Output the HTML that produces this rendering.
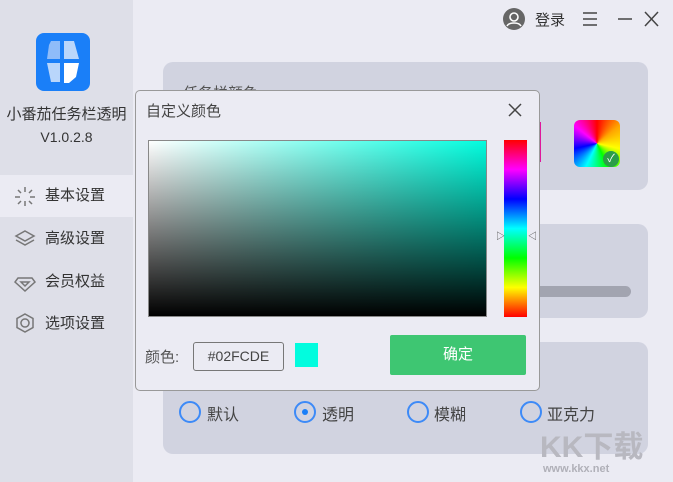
<!DOCTYPE html><html><head><meta charset="utf-8"><style>
*{margin:0;padding:0;box-sizing:border-box}
body{width:673px;height:482px;overflow:hidden;background:#ebebf3;font-family:"Liberation Sans","Noto Sans CJK SC",sans-serif;position:relative;color:#333}
.side{position:absolute;left:0;top:0;width:133px;height:482px;background:#dedfe8}
.abs{position:absolute}
.card{position:absolute;left:163px;width:485px;background:#d1d3e0;border-radius:10px}
.nav{position:absolute;left:0;width:133px;height:42px;font-size:15px;line-height:42px;padding-left:45px;color:#333}
.radio{position:absolute;top:401px;width:22px;height:22px;border:2px solid #3d8af7;border-radius:50%}
.rl{position:absolute;top:401px;font-size:16px;color:#444}
</style></head><body>
<div class="side"></div>
<div class="abs" style="left:36px;top:33px;width:54px;height:58px;background:#1a7ff8;border-radius:8px"></div>
<svg class="abs" style="left:36px;top:33px" width="54" height="58"><path d="M15 8h9v18H11l2-14z" fill="#8fbcf9"/><path d="M28 8h10l5 18H28z" fill="#b9d6fb"/><path d="M11 30h13v19h-9z" fill="#b9d6fb"/><path d="M28 30h15l-3 14-7 6h-5z" fill="#fff"/></svg>
<div class="abs" style="left:0;top:103px;width:133px;text-align:center;font-size:15px">小番茄任务栏透明</div>
<div class="abs" style="left:0;top:129px;width:133px;text-align:center;font-size:14px">V1.0.2.8</div>
<div class="nav" style="top:175px;background:#ebebf3">基本设置</div>
<div class="nav" style="top:218px">高级设置</div>
<div class="nav" style="top:261px">会员权益</div>
<div class="nav" style="top:303px">选项设置</div>
<svg class="abs" style="left:14px;top:186px" width="22" height="160" fill="none" stroke="#777" stroke-width="1.5"><path d="M11 1v5M11 15v5M1 11h5M16 11h5M4 4l3 3M15 15l3 3M4 18l3-3M15 7l3-3"/><path d="M11 45l9 5-9 5-9-5zM2 54l9 5 9-5"/><path d="M4 92h14l3 4-10 9-10-9zM7 96h8l-4 4z"/><path d="M11 128l8 4.5v9L11 146l-8-4.5v-9zM11 133a4 4 0 1 0 .01 0"/></svg>
<svg class="abs" style="left:503px;top:8px" width="22" height="22"><circle cx="11" cy="11" r="11" fill="#666"/><circle cx="11" cy="9" r="4" fill="none" stroke="#fff" stroke-width="1.6"/><path d="M4 18c2-4 12-4 14 0" fill="none" stroke="#fff" stroke-width="1.6"/></svg>
<div class="abs" style="left:535px;top:9px;font-size:15px">登录</div>
<svg class="abs" style="left:582px;top:9px" width="80" height="20" stroke="#444" stroke-width="1.5"><path d="M1 4h14M1 10h14M1 16h14M36 10h14M63 3l13 14M76 3L63 17"/></svg>
<div class="card" style="top:62px;height:128px"></div>
<div class="abs" style="left:183px;top:82px;font-size:15px;color:#555">任务栏颜色</div>
<div class="abs" style="left:535px;top:122px;width:6px;height:40px;background:#e0179c"></div>
<div class="abs" style="left:574px;top:120px;width:46px;height:47px;border-radius:6px;background:conic-gradient(red,orange,yellow,lime,cyan,blue,magenta,red)"></div>
<div class="abs" style="left:603px;top:151px;width:16px;height:16px;border-radius:50%;background:#2c9d48;color:#fff;font-size:11px;text-align:center;line-height:16px">✓</div>
<div class="card" style="top:224px;height:94px"></div>
<div class="abs" style="left:527px;top:286px;width:104px;height:11px;border-radius:6px;background:#a2a4b0"></div>
<div class="card" style="top:342px;height:112px"></div>
<div class="radio" style="left:179px"></div><div class="rl" style="left:207px">默认</div>
<div class="radio" style="left:294px"></div><div class="abs" style="left:302px;top:409px;width:6px;height:6px;border-radius:50%;background:#1a7ff8"></div><div class="rl" style="left:322px">透明</div>
<div class="radio" style="left:407px"></div><div class="rl" style="left:434px">模糊</div>
<div class="radio" style="left:520px"></div><div class="rl" style="left:547px">亚克力</div>
<div class="abs" style="left:540px;top:422px;font-size:30px;color:#b8b8c0;font-weight:bold">KK下载</div>
<div class="abs" style="left:543px;top:463px;font-size:11px;color:#b0b0b8;font-weight:bold">www.kkx.net</div>
<div class="abs" style="left:135px;top:90px;width:405px;height:301px;background:#ebebf3;border:1px solid #999;border-radius:5px"></div>
<div class="abs" style="left:146px;top:100px;font-size:15px;color:#444">自定义颜色</div>
<svg class="abs" style="left:508px;top:103px" width="14" height="14" stroke="#444" stroke-width="1.5"><path d="M1 1l12 12M13 1L1 13"/></svg>
<div class="abs" style="left:148px;top:140px;width:339px;height:177px;border:1px solid #888;background:linear-gradient(to bottom,transparent,#000),linear-gradient(to right,#fff,#02fcde)"></div>
<div class="abs" style="left:504px;top:140px;width:23px;height:177px;background:linear-gradient(to bottom,red,magenta,blue,cyan,lime,yellow,red)"></div>
<div class="abs" style="left:496px;top:229px;font-size:9px;color:#444">▷</div><div class="abs" style="left:528px;top:229px;font-size:9px;color:#444">◁</div>
<div class="abs" style="left:145px;top:346px;font-size:15px;color:#555">颜色:</div>
<div class="abs" style="left:193px;top:342px;width:91px;height:29px;border:1.5px solid #777;border-radius:3px;font-size:14px;text-align:center;line-height:26px;color:#444">#02FCDE</div>
<div class="abs" style="left:295px;top:343px;width:23px;height:24px;background:#02fcde"></div>
<div class="abs" style="left:390px;top:335px;width:136px;height:40px;background:#3ec672;border-radius:2px;color:#fff;font-size:15px;text-align:center;line-height:40px">确定</div>
</body></html>
